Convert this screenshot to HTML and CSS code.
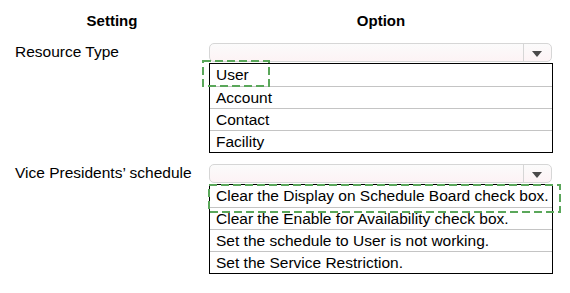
FILE: index.html
```html
<!DOCTYPE html>
<html lang="en">
<head>
    <meta charset="UTF-8">
    <title>Setting / Option</title>
    <link rel="stylesheet" href="styles.css">
</head>
<body>

<div class="sheet">
    <div class="head">Setting</div>
    <div class="head">Option</div>

    <div class="label">Resource Type</div>
    <div class="field">
        <div class="select"><span class="arrow"></span></div>
        <div class="list">
            <div class="item">User</div>
            <div class="item">Account</div>
            <div class="item">Contact</div>
            <div class="item">Facility</div>
            <div class="mark mark-user">
                <svg width="68" height="27" viewBox="0 0 68 27">
                    <rect x="1" y="1" width="66" height="25" />
                </svg>
            </div>
        </div>
    </div>

    <div class="label">Vice Presidents’ schedule</div>
    <div class="field">
        <div class="select"><span class="arrow"></span></div>
        <div class="list">
            <div class="item">Clear the Display on Schedule Board check box.</div>
            <div class="item">Clear the Enable for Availability check box.</div>
            <div class="item">Set the schedule to User is not working.</div>
            <div class="item">Set the Service Restriction.</div>
            <div class="mark mark-display">
                <svg width="353" height="29" viewBox="0 0 353 29">
                    <rect x="1" y="1" width="351" height="27" />
                </svg>
            </div>
        </div>
    </div>
</div>

</body>
</html>
```

FILE: styles.css
```css
/* General Styling */
* {
    box-sizing: border-box;
    margin: 0;
    padding: 0;
}

body {
    font-family: "Liberation Sans", Arial, sans-serif;
    font-size: 15.5px;
    color: #000;
    background: #fff;
}

.sheet {
    display: grid;
    grid-template-columns: 194px 344px;
    padding: 12px 0 0 15px;
}

.head {
    font-weight: bold;
    font-size: 15px;
    text-align: center;
    line-height: 18px;
    margin-bottom: 13px;
}

.label {
    line-height: 17px;
}

.field {
    margin-bottom: 11px;
}

/* Dropdown */
.select {
    position: relative;
    height: 19px;
    width: 343px;
    border: 1px solid #d6d6d6;
    border-radius: 5px;
    background: linear-gradient(#fbfbfb, #fdf3f5);
    margin-bottom: 1px;
}

.select::after {
    content: "";
    position: absolute;
    top: 0;
    bottom: 0;
    right: 27px;
    border-left: 1px solid #d6d6d6;
}

.arrow {
    position: absolute;
    right: 9px;
    top: 7px;
    width: 0;
    height: 0;
    border-left: 5px solid transparent;
    border-right: 5px solid transparent;
    border-top: 6px solid #4a4a4a;
}

/* Option list */
.list {
    position: relative;
    border: 1px solid #000;
}

.item {
    height: 22px;
    line-height: 21px;
    padding-left: 6px;
    border-top: 1px solid #c4c4c4;
    white-space: nowrap;
}

.item:first-child {
    border-top: none;
}

/* Green dashed answer marks */
.mark {
    position: absolute;
    line-height: 0;
}

.mark svg {
    display: block;
    fill: none;
    stroke: #5aa75a;
    stroke-width: 2;
    stroke-dasharray: 8 4;
}

.mark-user {
    left: -8px;
    top: -4px;
}

.mark-display {
    left: -2px;
    top: -1px;
}
```
